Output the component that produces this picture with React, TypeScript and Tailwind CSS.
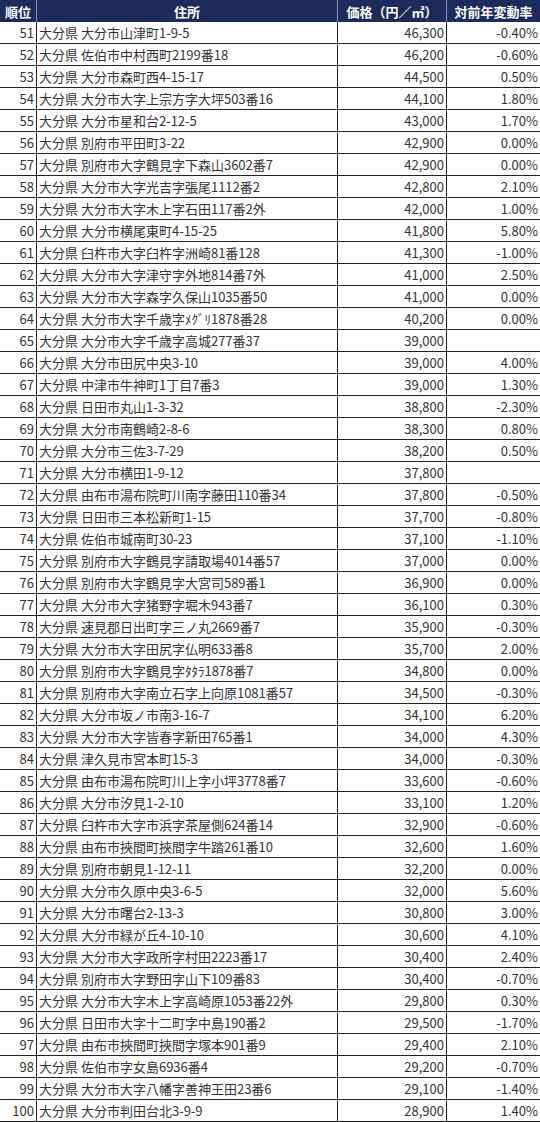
import React from "react";

const rows: [number, string, string, string][] = [
  [51, "大分県 大分市山津町1-9-5", "46,300", "-0.40%"],
  [52, "大分県 佐伯市中村西町2199番18", "46,200", "-0.60%"],
  [53, "大分県 大分市森町西4-15-17", "44,500", "0.50%"],
  [54, "大分県 大分市大字上宗方字大坪503番16", "44,100", "1.80%"],
  [55, "大分県 大分市星和台2-12-5", "43,000", "1.70%"],
  [56, "大分県 別府市平田町3-22", "42,900", "0.00%"],
  [57, "大分県 別府市大字鶴見字下森山3602番7", "42,900", "0.00%"],
  [58, "大分県 大分市大字光吉字張尾1112番2", "42,800", "2.10%"],
  [59, "大分県 大分市大字木上字石田117番2外", "42,000", "1.00%"],
  [60, "大分県 大分市横尾東町4-15-25", "41,800", "5.80%"],
  [61, "大分県 臼杵市大字臼杵字洲崎81番128", "41,300", "-1.00%"],
  [62, "大分県 大分市大字津守字外地814番7外", "41,000", "2.50%"],
  [63, "大分県 大分市大字森字久保山1035番50", "41,000", "0.00%"],
  [64, "大分県 大分市大字千歳字ﾒｸﾞﾘ1878番28", "40,200", "0.00%"],
  [65, "大分県 大分市大字千歳字高城277番37", "39,000", ""],
  [66, "大分県 大分市田尻中央3-10", "39,000", "4.00%"],
  [67, "大分県 中津市牛神町1丁目7番3", "39,000", "1.30%"],
  [68, "大分県 日田市丸山1-3-32", "38,800", "-2.30%"],
  [69, "大分県 大分市南鶴崎2-8-6", "38,300", "0.80%"],
  [70, "大分県 大分市三佐3-7-29", "38,200", "0.50%"],
  [71, "大分県 大分市横田1-9-12", "37,800", ""],
  [72, "大分県 由布市湯布院町川南字藤田110番34", "37,800", "-0.50%"],
  [73, "大分県 日田市三本松新町1-15", "37,700", "-0.80%"],
  [74, "大分県 佐伯市城南町30-23", "37,100", "-1.10%"],
  [75, "大分県 別府市大字鶴見字請取場4014番57", "37,000", "0.00%"],
  [76, "大分県 別府市大字鶴見字大宮司589番1", "36,900", "0.00%"],
  [77, "大分県 大分市大字猪野字堀木943番7", "36,100", "0.30%"],
  [78, "大分県 速見郡日出町字三ノ丸2669番7", "35,900", "-0.30%"],
  [79, "大分県 大分市大字田尻字仏明633番8", "35,700", "2.00%"],
  [80, "大分県 別府市大字鶴見字ﾀﾀﾗ1878番7", "34,800", "0.00%"],
  [81, "大分県 別府市大字南立石字上向原1081番57", "34,500", "-0.30%"],
  [82, "大分県 大分市坂ノ市南3-16-7", "34,100", "6.20%"],
  [83, "大分県 大分市大字皆春字新田765番1", "34,000", "4.30%"],
  [84, "大分県 津久見市宮本町15-3", "34,000", "-0.30%"],
  [85, "大分県 由布市湯布院町川上字小坪3778番7", "33,600", "-0.60%"],
  [86, "大分県 大分市汐見1-2-10", "33,100", "1.20%"],
  [87, "大分県 臼杵市大字市浜字茶屋側624番14", "32,900", "-0.60%"],
  [88, "大分県 由布市挾間町挾間字牛踏261番10", "32,600", "1.60%"],
  [89, "大分県 別府市朝見1-12-11", "32,200", "0.00%"],
  [90, "大分県 大分市久原中央3-6-5", "32,000", "5.60%"],
  [91, "大分県 大分市曙台2-13-3", "30,800", "3.00%"],
  [92, "大分県 大分市緑が丘4-10-10", "30,600", "4.10%"],
  [93, "大分県 大分市大字政所字村田2223番17", "30,400", "2.40%"],
  [94, "大分県 別府市大字野田字山下109番83", "30,400", "-0.70%"],
  [95, "大分県 大分市大字木上字高崎原1053番22外", "29,800", "0.30%"],
  [96, "大分県 日田市大字十二町字中島190番2", "29,500", "-1.70%"],
  [97, "大分県 由布市挾間町挾間字塚本901番9", "29,400", "2.10%"],
  [98, "大分県 佐伯市字女島6936番4", "29,200", "-0.70%"],
  [99, "大分県 大分市大字八幡字善神王田23番6", "29,100", "-1.40%"],
  [100, "大分県 大分市判田台北3-9-9", "28,900", "1.40%"],
];

export default function App() {
  return (
    <div
      className="w-[540px] bg-white text-[#333333]"
      style={{ fontFamily: '"Noto Sans CJK JP", "Noto Sans", sans-serif' }}
    >
      <div className="grid grid-cols-[37px_301px_109px_93px] h-[22px] bg-[#1d2b5c] text-white font-bold text-[13px] leading-none">
        <div className="flex items-center justify-center border-r border-[#8a92ad]">順位</div>
        <div className="flex items-center justify-center border-r border-[#8a92ad]">住所</div>
        <div className="flex items-center justify-center border-r border-[#8a92ad]">価格（円／㎡）</div>
        <div className="flex items-center justify-center">対前年変動率</div>
      </div>
      {rows.map(([rank, addr, price, chg]) => (
        <div
          key={rank}
          className="grid grid-cols-[37px_301px_109px_93px] h-[22px] border-b border-[#222222] text-[13px] leading-none"
        >
          <div className="flex items-center justify-end pr-[2px] border-r border-[#222222]">{rank}</div>
          <div className="flex items-center pl-[2px] border-r border-[#222222] whitespace-nowrap overflow-hidden">{addr}</div>
          <div className="flex items-center justify-end pr-[2px] border-r border-[#222222]">{price}</div>
          <div className="flex items-center justify-end pr-[2px]">{chg}</div>
        </div>
      ))}
    </div>
  );
}
